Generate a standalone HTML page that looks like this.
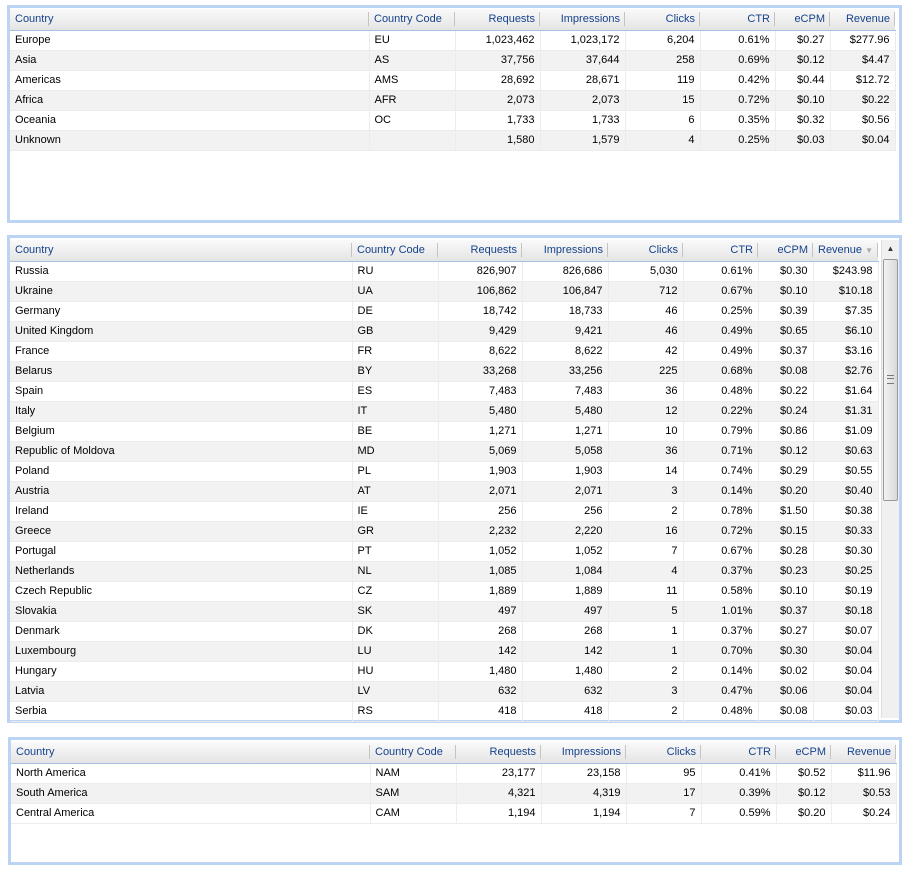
<!DOCTYPE html>
<html><head><meta charset="utf-8"><style>
body{margin:0;width:908px;height:873px;background:#fff;position:relative;overflow:hidden;font-family:"Liberation Sans",Arial,sans-serif;font-size:11px}
.p{position:absolute;border:3px solid #bcd4f4;background:#fff;box-sizing:border-box}
table{border-collapse:collapse;table-layout:fixed;position:absolute}
td,th{height:20px;padding:0 5px;white-space:nowrap;overflow:hidden;box-sizing:border-box}
th{height:21px;font-weight:normal;color:#15428b;background:linear-gradient(#fafafa,#e4e4e4);border-bottom:1px solid #a9c2e4;text-align:right;position:relative}
th:after{content:"";position:absolute;right:0;top:3px;height:14px;border-right:1px solid #c4c4c4}
th.l,td.l{text-align:left}
td{text-align:right;border-right:1px solid #ececec;border-bottom:1px solid #ececec;color:#000}
tr:nth-child(odd) td{background:#f2f2f2}
</style></head><body>

<div class="p" style="left:7px;top:5px;width:895px;height:218px">
<table style="left:0;top:1px;width:885px">
<colgroup><col style="width:359px"><col style="width:86px"><col style="width:85px"><col style="width:85px"><col style="width:75px"><col style="width:75px"><col style="width:55px"><col style="width:65px"></colgroup>
<tr><th class="l">Country</th><th class="l">Country Code</th><th>Requests</th><th>Impressions</th><th>Clicks</th><th>CTR</th><th>eCPM</th><th>Revenue</th></tr>
<tr><td class="l">Europe</td><td class="l">EU</td><td>1,023,462</td><td>1,023,172</td><td>6,204</td><td>0.61%</td><td>$0.27</td><td>$277.96</td></tr>
<tr><td class="l">Asia</td><td class="l">AS</td><td>37,756</td><td>37,644</td><td>258</td><td>0.69%</td><td>$0.12</td><td>$4.47</td></tr>
<tr><td class="l">Americas</td><td class="l">AMS</td><td>28,692</td><td>28,671</td><td>119</td><td>0.42%</td><td>$0.44</td><td>$12.72</td></tr>
<tr><td class="l">Africa</td><td class="l">AFR</td><td>2,073</td><td>2,073</td><td>15</td><td>0.72%</td><td>$0.10</td><td>$0.22</td></tr>
<tr><td class="l">Oceania</td><td class="l">OC</td><td>1,733</td><td>1,733</td><td>6</td><td>0.35%</td><td>$0.32</td><td>$0.56</td></tr>
<tr><td class="l">Unknown</td><td class="l"></td><td>1,580</td><td>1,579</td><td>4</td><td>0.25%</td><td>$0.03</td><td>$0.04</td></tr>
</table></div>

<div class="p" style="left:7px;top:235px;width:895px;height:488px">
<table style="left:0;top:2px;width:868px">
<colgroup><col style="width:342px"><col style="width:86px"><col style="width:84px"><col style="width:86px"><col style="width:75px"><col style="width:75px"><col style="width:55px"><col style="width:65px"></colgroup>
<tr><th class="l">Country</th><th class="l">Country Code</th><th>Requests</th><th>Impressions</th><th>Clicks</th><th>CTR</th><th>eCPM</th><th class="l">Revenue <span style="color:#aaa;font-size:8px">▼</span></th></tr>
<tr><td class="l">Russia</td><td class="l">RU</td><td>826,907</td><td>826,686</td><td>5,030</td><td>0.61%</td><td>$0.30</td><td>$243.98</td></tr>
<tr><td class="l">Ukraine</td><td class="l">UA</td><td>106,862</td><td>106,847</td><td>712</td><td>0.67%</td><td>$0.10</td><td>$10.18</td></tr>
<tr><td class="l">Germany</td><td class="l">DE</td><td>18,742</td><td>18,733</td><td>46</td><td>0.25%</td><td>$0.39</td><td>$7.35</td></tr>
<tr><td class="l">United Kingdom</td><td class="l">GB</td><td>9,429</td><td>9,421</td><td>46</td><td>0.49%</td><td>$0.65</td><td>$6.10</td></tr>
<tr><td class="l">France</td><td class="l">FR</td><td>8,622</td><td>8,622</td><td>42</td><td>0.49%</td><td>$0.37</td><td>$3.16</td></tr>
<tr><td class="l">Belarus</td><td class="l">BY</td><td>33,268</td><td>33,256</td><td>225</td><td>0.68%</td><td>$0.08</td><td>$2.76</td></tr>
<tr><td class="l">Spain</td><td class="l">ES</td><td>7,483</td><td>7,483</td><td>36</td><td>0.48%</td><td>$0.22</td><td>$1.64</td></tr>
<tr><td class="l">Italy</td><td class="l">IT</td><td>5,480</td><td>5,480</td><td>12</td><td>0.22%</td><td>$0.24</td><td>$1.31</td></tr>
<tr><td class="l">Belgium</td><td class="l">BE</td><td>1,271</td><td>1,271</td><td>10</td><td>0.79%</td><td>$0.86</td><td>$1.09</td></tr>
<tr><td class="l">Republic of Moldova</td><td class="l">MD</td><td>5,069</td><td>5,058</td><td>36</td><td>0.71%</td><td>$0.12</td><td>$0.63</td></tr>
<tr><td class="l">Poland</td><td class="l">PL</td><td>1,903</td><td>1,903</td><td>14</td><td>0.74%</td><td>$0.29</td><td>$0.55</td></tr>
<tr><td class="l">Austria</td><td class="l">AT</td><td>2,071</td><td>2,071</td><td>3</td><td>0.14%</td><td>$0.20</td><td>$0.40</td></tr>
<tr><td class="l">Ireland</td><td class="l">IE</td><td>256</td><td>256</td><td>2</td><td>0.78%</td><td>$1.50</td><td>$0.38</td></tr>
<tr><td class="l">Greece</td><td class="l">GR</td><td>2,232</td><td>2,220</td><td>16</td><td>0.72%</td><td>$0.15</td><td>$0.33</td></tr>
<tr><td class="l">Portugal</td><td class="l">PT</td><td>1,052</td><td>1,052</td><td>7</td><td>0.67%</td><td>$0.28</td><td>$0.30</td></tr>
<tr><td class="l">Netherlands</td><td class="l">NL</td><td>1,085</td><td>1,084</td><td>4</td><td>0.37%</td><td>$0.23</td><td>$0.25</td></tr>
<tr><td class="l">Czech Republic</td><td class="l">CZ</td><td>1,889</td><td>1,889</td><td>11</td><td>0.58%</td><td>$0.10</td><td>$0.19</td></tr>
<tr><td class="l">Slovakia</td><td class="l">SK</td><td>497</td><td>497</td><td>5</td><td>1.01%</td><td>$0.37</td><td>$0.18</td></tr>
<tr><td class="l">Denmark</td><td class="l">DK</td><td>268</td><td>268</td><td>1</td><td>0.37%</td><td>$0.27</td><td>$0.07</td></tr>
<tr><td class="l">Luxembourg</td><td class="l">LU</td><td>142</td><td>142</td><td>1</td><td>0.70%</td><td>$0.30</td><td>$0.04</td></tr>
<tr><td class="l">Hungary</td><td class="l">HU</td><td>1,480</td><td>1,480</td><td>2</td><td>0.14%</td><td>$0.02</td><td>$0.04</td></tr>
<tr><td class="l">Latvia</td><td class="l">LV</td><td>632</td><td>632</td><td>3</td><td>0.47%</td><td>$0.06</td><td>$0.04</td></tr>
<tr><td class="l">Serbia</td><td class="l">RS</td><td>418</td><td>418</td><td>2</td><td>0.48%</td><td>$0.08</td><td>$0.03</td></tr>
</table>
<div style="position:absolute;left:871px;top:2px;width:17px;height:478px;background:#f0f0f0;border-left:1px solid #ddd">
<div style="height:18px;text-align:center;color:#333;font-size:8px;line-height:18px">▲</div>
<div style="position:absolute;left:1px;top:19px;width:13px;height:240px;border:1px solid #999;border-radius:2px;background:linear-gradient(90deg,#f4f4f4,#d8d8d8)"><div style="position:absolute;left:3px;top:115px;width:7px;height:7px;border-top:1px solid #777;border-bottom:1px solid #777"><div style="margin-top:2px;border-top:1px solid #777"></div></div></div>
</div>
</div>

<div class="p" style="left:8px;top:737px;width:894px;height:128px">
<table style="left:0;top:2px;width:885px">
<colgroup><col style="width:359px"><col style="width:86px"><col style="width:85px"><col style="width:85px"><col style="width:75px"><col style="width:75px"><col style="width:55px"><col style="width:65px"></colgroup>
<tr><th class="l">Country</th><th class="l">Country Code</th><th>Requests</th><th>Impressions</th><th>Clicks</th><th>CTR</th><th>eCPM</th><th>Revenue</th></tr>
<tr><td class="l">North America</td><td class="l">NAM</td><td>23,177</td><td>23,158</td><td>95</td><td>0.41%</td><td>$0.52</td><td>$11.96</td></tr>
<tr><td class="l">South America</td><td class="l">SAM</td><td>4,321</td><td>4,319</td><td>17</td><td>0.39%</td><td>$0.12</td><td>$0.53</td></tr>
<tr><td class="l">Central America</td><td class="l">CAM</td><td>1,194</td><td>1,194</td><td>7</td><td>0.59%</td><td>$0.20</td><td>$0.24</td></tr>
</table></div>

</body></html>
